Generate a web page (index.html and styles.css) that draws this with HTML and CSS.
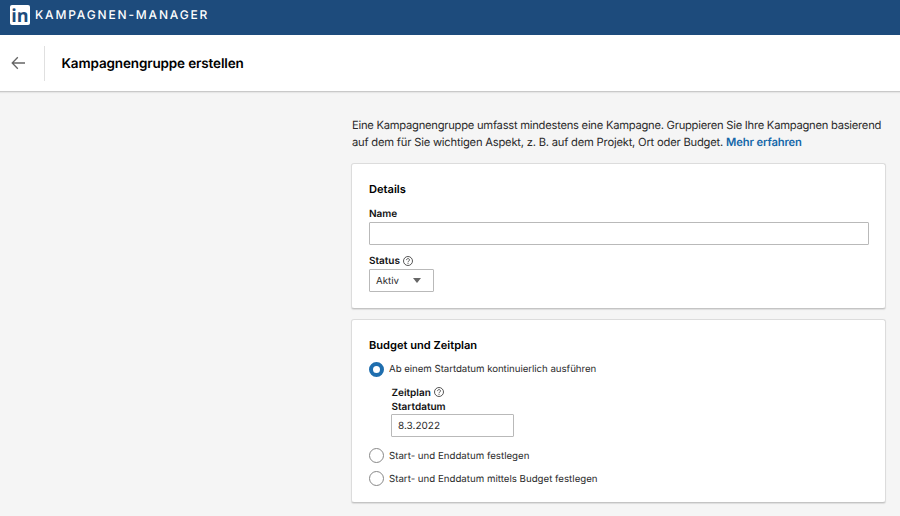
FILE: index.html
```html
<!DOCTYPE html>
<html lang="de">
<head>
<meta charset="utf-8">
<title>Kampagnen-Manager</title>
<link rel="stylesheet" href="styles.css">
</head>
<body>
<header class="topbar">
  <span class="logo">in</span>
  <span class="product">KAMPAGNEN-MANAGER</span>
</header>
<div class="pagebar">
  <a class="back"><svg width="14" height="14" viewBox="0 0 14 14"><path d="M6.8 1.2 1.2 7l5.6 5.8M1.2 7H14" fill="none" stroke="#666" stroke-width="1.3"/></svg></a>
  <h1>Kampagnengruppe erstellen</h1>
</div>
<main>
  <p class="intro">Eine Kampagnengruppe umfasst mindestens eine Kampagne. Gruppieren Sie Ihre Kampagnen basierend<br><span class="second">auf dem für Sie wichtigen Aspekt, z. B. auf dem Projekt, Ort oder Budget. <a class="more">Mehr erfahren</a></span></p>
  <section class="card details">
    <h2>Details</h2>
    <div class="label"><span>Name</span></div>
    <div class="input"></div>
    <div class="label status"><span>Status</span><svg class="help" viewBox="0 0 10 10"><circle cx="5" cy="5" r="4.5"/><path d="M3.5 4.1C3.5 2.1 6.5 2.1 6.5 4 6.5 5 5 5 5 6.2M5 6.9v1"/></svg></div>
    <div class="select"><span>Aktiv</span><i class="caret"></i></div>
  </section>
  <section class="card budget">
    <h2>Budget und Zeitplan</h2>
    <div class="radio"><i class="dot on"></i><span>Ab einem Startdatum kontinuierlich ausführen</span></div>
    <div class="schedule">
      <div class="label"><span>Zeitplan</span><svg class="help" viewBox="0 0 10 10"><circle cx="5" cy="5" r="4.5"/><path d="M3.5 4.1C3.5 2.1 6.5 2.1 6.5 4 6.5 5 5 5 5 6.2M5 6.9v1"/></svg></div>
      <div class="label"><span>Startdatum</span></div>
      <div class="input date">8.3.2022</div>
    </div>
    <div class="radio"><i class="dot"></i><span>Start- und Enddatum festlegen</span></div>
    <div class="radio"><i class="dot"></i><span>Start- und Enddatum mittels Budget festlegen</span></div>
  </section>
</main>
</body>
</html>
```
FILE: styles.css
```css
* { box-sizing: border-box; }
body { margin: 0; height: 516px; overflow: hidden; background: #f5f5f5; color: #2b2b2b; font-family: Inter, sans-serif; font-size: 9.7px; text-rendering: geometricPrecision; }
h1, h2, p { margin: 0; }
.topbar { height: 35px; padding: 5px 0 0 10px; display: flex; align-items: flex-start; background: #1d4b7c; }
.logo { width: 20px; height: 20px; border-radius: 2px; background: #fff; color: #1d4b7c; font: 700 18px/22px "Open Sans", sans-serif; text-align: center; }
.product { margin-left: 5px; color: #fff; font-size: 12px; font-weight: 500; line-height: 20px; letter-spacing: 1.83px; }
.pagebar { height: 57px; display: flex; align-items: center; background: #fff; border-bottom: 1px solid #c9c9c9; box-shadow: 0 1px 1px #e6e6e6; }
.back { width: 45px; height: 35px; padding-left: 11px; display: flex; align-items: center; border-right: 1px solid #e0e0e0; }
h1 { margin-left: 16.5px; padding-top: 1px; color: #000; font-size: 13.5px; font-weight: 600; line-height: 20px; letter-spacing: -.14px; }
main { width: 535px; margin: 25px 0 0 351px; }
.intro { padding-left: 1px; height: 46px; font-size: 11.2px; line-height: 17px; letter-spacing: -.25px; white-space: nowrap; }
.second { letter-spacing: -.205px; }
.more { color: #1667a9; font-weight: 600; letter-spacing: -.12px; }
.card { padding: 15px 16px 0 17px; background: #fff; border: 1px solid #dcdcdc; border-bottom-color: #c4c4c4; border-radius: 3px; box-shadow: 0 1px 1px #ddd; }
.details { height: 146px; }
.budget { height: 184px; margin-top: 10px; }
h2 { color: #000; font-size: 11.1px; font-weight: 600; line-height: 21px; height: 20px; }
.label { height: 16px; display: flex; align-items: center; gap: 3px; color: #111; font-size: 10px; font-weight: 600; line-height: 14px; }
.label span { padding-top: 1.5px; }
h2 + .label { margin: 6px 0 1px; }
.status { margin-top: 8px; }
.status span { padding-top: 0; }
.help { width: 10px; height: 10px; fill: none; stroke: #444; stroke-width: .9; }
.input, .select { height: 23px; border: 1px solid #b9b9b9; border-radius: 1px; line-height: 23px; }
.select { width: 65px; padding: 0 12px 0 6px; display: flex; align-items: center; justify-content: space-between; }
.select span { padding-top: 1px; }
.caret { border: 4px solid transparent; border-top: 5px solid #666; border-bottom: 0; }
.radio { height: 16px; margin-top: 7px; display: flex; align-items: center; gap: 5px; }
.radio span { padding-top: 2px; }
.dot { width: 15px; height: 15px; border: 1px solid #888; border-radius: 50%; }
.on { border: 4px solid #1f6eae; }
.on + span { padding-top: 1px; letter-spacing: -.05px; }
.budget h2 + .radio { margin-top: 6px; }
.schedule { margin: 8px 0 10px 22px; }
.schedule .label { height: 14px; padding-left: .5px; }
.date { width: 123px; margin-top: 1px; padding-left: 6px; font-size: 10px; }
.schedule + .radio { margin-top: 0; }
```
